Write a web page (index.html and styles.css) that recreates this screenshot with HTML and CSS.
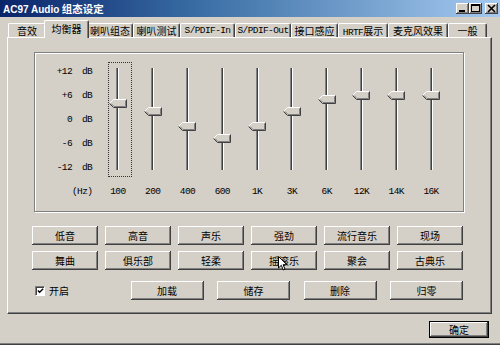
FILE: index.html
```html
<!DOCTYPE html>
<html>
<head>
<meta charset="utf-8">
<title>AC97 Audio 组态设定</title>
<link rel="stylesheet" href="styles.css">
</head>
<body>
<div class="window">
  <div class="titlebar">
    <span class="title"><span class="title-lat">AC97 Audio</span> 组态设定</span>
    <div class="caps">
      <span class="cap"><svg width="13" height="11" viewBox="0 0 13 11"><rect x="3" y="7" width="6" height="2" fill="#000"/></svg></span>
      <span class="cap"><svg width="13" height="11" viewBox="0 0 13 11"><rect x="2.5" y="1.5" width="8" height="7" fill="none" stroke="#000"/><rect x="2" y="1" width="9" height="2" fill="#000"/></svg></span>
      <span class="cap close"><svg width="13" height="11" viewBox="0 0 13 11"><path d="M3 2 L10 9 M10 2 L3 9" stroke="#000" stroke-width="1.6"/></svg></span>
    </div>
  </div>

  <div class="tabs">
    <div class="tab">音效</div>
    <div class="tab active">均衡器</div>
    <div class="tab">喇叭组态</div>
    <div class="tab">喇叭测试</div>
    <div class="tab lat">S/PDIF-In</div>
    <div class="tab lat">S/PDIF-Out</div>
    <div class="tab">接口感应</div>
    <div class="tab"><span class="lat">HRTF</span>展示</div>
    <div class="tab">麦克风效果</div>
    <div class="tab">一般</div>
  </div>

  <div class="panel">
    <div class="eqbox">
      <div class="scale lat">
        <div class="srow"><span class="num">+12</span><span>dB</span></div>
        <div class="srow"><span class="num">+6</span><span>dB</span></div>
        <div class="srow"><span class="num">0</span><span>dB</span></div>
        <div class="srow"><span class="num">-6</span><span>dB</span></div>
        <div class="srow"><span class="num">-12</span><span>dB</span></div>
        <div class="srow hz">(Hz)</div>
      </div>

      <div class="band">
        <span class="focusrect"></span>
        <div class="slider"><div class="track"></div>
          <svg class="thumb" style="top:31px" width="18" height="9" viewBox="0 0 18 9"><polygon points="0.5,4.5 4.5,0.5 17.5,0.5 17.5,8.5 4.5,8.5" fill="#D4D0C8"/><polyline points="0.5,4.5 4.5,0.5 17.5,0.5" fill="none" stroke="#fff"/><polyline points="0.5,4.5 4.5,8.5 17.5,8.5 17.5,0.5" fill="none" stroke="#404040"/><polyline points="2,4.5 5,7.5 16.5,7.5 16.5,1.5" fill="none" stroke="#808080"/></svg>
        </div>
        <div class="freq lat">100</div>
      </div>
      <div class="band">
        <div class="slider"><div class="track"></div>
          <svg class="thumb" style="top:39px" width="18" height="9" viewBox="0 0 18 9"><polygon points="0.5,4.5 4.5,0.5 17.5,0.5 17.5,8.5 4.5,8.5" fill="#D4D0C8"/><polyline points="0.5,4.5 4.5,0.5 17.5,0.5" fill="none" stroke="#fff"/><polyline points="0.5,4.5 4.5,8.5 17.5,8.5 17.5,0.5" fill="none" stroke="#404040"/><polyline points="2,4.5 5,7.5 16.5,7.5 16.5,1.5" fill="none" stroke="#808080"/></svg>
        </div>
        <div class="freq lat">200</div>
      </div>
      <div class="band">
        <div class="slider"><div class="track"></div>
          <svg class="thumb" style="top:54px" width="18" height="9" viewBox="0 0 18 9"><polygon points="0.5,4.5 4.5,0.5 17.5,0.5 17.5,8.5 4.5,8.5" fill="#D4D0C8"/><polyline points="0.5,4.5 4.5,0.5 17.5,0.5" fill="none" stroke="#fff"/><polyline points="0.5,4.5 4.5,8.5 17.5,8.5 17.5,0.5" fill="none" stroke="#404040"/><polyline points="2,4.5 5,7.5 16.5,7.5 16.5,1.5" fill="none" stroke="#808080"/></svg>
        </div>
        <div class="freq lat">400</div>
      </div>
      <div class="band">
        <div class="slider"><div class="track"></div>
          <svg class="thumb" style="top:66px" width="18" height="9" viewBox="0 0 18 9"><polygon points="0.5,4.5 4.5,0.5 17.5,0.5 17.5,8.5 4.5,8.5" fill="#D4D0C8"/><polyline points="0.5,4.5 4.5,0.5 17.5,0.5" fill="none" stroke="#fff"/><polyline points="0.5,4.5 4.5,8.5 17.5,8.5 17.5,0.5" fill="none" stroke="#404040"/><polyline points="2,4.5 5,7.5 16.5,7.5 16.5,1.5" fill="none" stroke="#808080"/></svg>
        </div>
        <div class="freq lat">600</div>
      </div>
      <div class="band">
        <div class="slider"><div class="track"></div>
          <svg class="thumb" style="top:54px" width="18" height="9" viewBox="0 0 18 9"><polygon points="0.5,4.5 4.5,0.5 17.5,0.5 17.5,8.5 4.5,8.5" fill="#D4D0C8"/><polyline points="0.5,4.5 4.5,0.5 17.5,0.5" fill="none" stroke="#fff"/><polyline points="0.5,4.5 4.5,8.5 17.5,8.5 17.5,0.5" fill="none" stroke="#404040"/><polyline points="2,4.5 5,7.5 16.5,7.5 16.5,1.5" fill="none" stroke="#808080"/></svg>
        </div>
        <div class="freq lat">1K</div>
      </div>
      <div class="band">
        <div class="slider"><div class="track"></div>
          <svg class="thumb" style="top:39px" width="18" height="9" viewBox="0 0 18 9"><polygon points="0.5,4.5 4.5,0.5 17.5,0.5 17.5,8.5 4.5,8.5" fill="#D4D0C8"/><polyline points="0.5,4.5 4.5,0.5 17.5,0.5" fill="none" stroke="#fff"/><polyline points="0.5,4.5 4.5,8.5 17.5,8.5 17.5,0.5" fill="none" stroke="#404040"/><polyline points="2,4.5 5,7.5 16.5,7.5 16.5,1.5" fill="none" stroke="#808080"/></svg>
        </div>
        <div class="freq lat">3K</div>
      </div>
      <div class="band">
        <div class="slider"><div class="track"></div>
          <svg class="thumb" style="top:27px" width="18" height="9" viewBox="0 0 18 9"><polygon points="0.5,4.5 4.5,0.5 17.5,0.5 17.5,8.5 4.5,8.5" fill="#D4D0C8"/><polyline points="0.5,4.5 4.5,0.5 17.5,0.5" fill="none" stroke="#fff"/><polyline points="0.5,4.5 4.5,8.5 17.5,8.5 17.5,0.5" fill="none" stroke="#404040"/><polyline points="2,4.5 5,7.5 16.5,7.5 16.5,1.5" fill="none" stroke="#808080"/></svg>
        </div>
        <div class="freq lat">6K</div>
      </div>
      <div class="band">
        <div class="slider"><div class="track"></div>
          <svg class="thumb" style="top:23px" width="18" height="9" viewBox="0 0 18 9"><polygon points="0.5,4.5 4.5,0.5 17.5,0.5 17.5,8.5 4.5,8.5" fill="#D4D0C8"/><polyline points="0.5,4.5 4.5,0.5 17.5,0.5" fill="none" stroke="#fff"/><polyline points="0.5,4.5 4.5,8.5 17.5,8.5 17.5,0.5" fill="none" stroke="#404040"/><polyline points="2,4.5 5,7.5 16.5,7.5 16.5,1.5" fill="none" stroke="#808080"/></svg>
        </div>
        <div class="freq lat">12K</div>
      </div>
      <div class="band">
        <div class="slider"><div class="track"></div>
          <svg class="thumb" style="top:23px" width="18" height="9" viewBox="0 0 18 9"><polygon points="0.5,4.5 4.5,0.5 17.5,0.5 17.5,8.5 4.5,8.5" fill="#D4D0C8"/><polyline points="0.5,4.5 4.5,0.5 17.5,0.5" fill="none" stroke="#fff"/><polyline points="0.5,4.5 4.5,8.5 17.5,8.5 17.5,0.5" fill="none" stroke="#404040"/><polyline points="2,4.5 5,7.5 16.5,7.5 16.5,1.5" fill="none" stroke="#808080"/></svg>
        </div>
        <div class="freq lat">14K</div>
      </div>
      <div class="band">
        <div class="slider"><div class="track"></div>
          <svg class="thumb" style="top:23px" width="18" height="9" viewBox="0 0 18 9"><polygon points="0.5,4.5 4.5,0.5 17.5,0.5 17.5,8.5 4.5,8.5" fill="#D4D0C8"/><polyline points="0.5,4.5 4.5,0.5 17.5,0.5" fill="none" stroke="#fff"/><polyline points="0.5,4.5 4.5,8.5 17.5,8.5 17.5,0.5" fill="none" stroke="#404040"/><polyline points="2,4.5 5,7.5 16.5,7.5 16.5,1.5" fill="none" stroke="#808080"/></svg>
        </div>
        <div class="freq lat">16K</div>
      </div>
    </div>

    <div class="presets">
      <button class="btn">低音</button>
      <button class="btn">高音</button>
      <button class="btn">声乐</button>
      <button class="btn">强劲</button>
      <button class="btn">流行音乐</button>
      <button class="btn">现场</button>
      <button class="btn">舞曲</button>
      <button class="btn">俱乐部</button>
      <button class="btn">轻柔</button>
      <button class="btn">摇滚乐</button>
      <button class="btn">聚会</button>
      <button class="btn">古典乐</button>
    </div>

    <div class="actions">
      <label class="check"><span class="box"><svg width="8" height="8" viewBox="0 0 8 8"><path d="M1 3.5 L3 5.5 L7 1.5" fill="none" stroke="#000" stroke-width="1.6"/></svg></span>开启</label>
      <button class="btn">加载</button>
      <button class="btn">储存</button>
      <button class="btn">删除</button>
      <button class="btn">归零</button>
    </div>
  </div>

  <div class="footer">
    <button class="btn default">确定</button>
  </div>
</div>
<svg class="cursor" width="10" height="16" viewBox="0 0 10 16"><path d="M0.5 0.5 L0.5 12 L3.3 9.3 L5.3 14 L7 13.2 L5.1 8.7 L8.8 8.7 Z" fill="#fff" stroke="#000" stroke-width="1"/></svg>
</body>
</html>
```

FILE: styles.css
```css
* { box-sizing: border-box; margin: 0; padding: 0; }
html, body { width: 500px; height: 345px; overflow: hidden; }
body {
  background: #D4D0C8;
  font-family: "Noto Sans CJK SC", "Noto Sans", sans-serif;
  font-size: 10px;
  color: #000;
  position: relative;
}
.lat {
  font-family: "Liberation Mono", "Noto Sans CJK SC", monospace;
  font-size: 9.5px;
  letter-spacing: -0.6px;
}
.window {
  height: 345px;
  display: flex;
  flex-direction: column;
  box-shadow: inset 0 -1px #404040, inset 0 -2px #808080;
}

/* title bar */
.titlebar {
  height: 17px;
  flex: none;
  display: flex;
  align-items: center;
  padding: 0 2px 0 3px;
  background: linear-gradient(to right, #0A246A, #3A6EA5 40%, #A6CAF0);
}
.title {
  color: #fff;
  font-weight: bold;
  font-size: 10.5px;
  line-height: 17px;
  white-space: nowrap;
}
.title-lat { font-family: "Liberation Sans", sans-serif; font-size: 10px; }
.caps { margin-left: auto; display: flex; align-items: center; }
.cap {
  width: 13px;
  height: 11px;
  background: #D4D0C8;
  box-shadow: inset -1px -1px #404040, inset 1px 1px #fff, inset -2px -2px #808080;
  display: flex;
}
.cap.close { margin-left: 3px; }

/* tabs */
.tabs {
  margin-top: 3px;
  height: 17px;
  flex: none;
  display: flex;
  align-items: flex-end;
  padding-left: 8px;
}
.tab {
  flex: none;
  height: 14px;
  line-height: 14px;
  text-align: center;
  white-space: nowrap;
  border-top: 1px solid #fff;
  border-left: 1px solid #fff;
  border-right: 1px solid #404040;
  border-radius: 2px 2px 0 0;
  box-shadow: inset -1px 0 #808080;
  background: #D4D0C8;
}
.tab:nth-child(1) { width: 38px; }
.tab:nth-child(2) { width: 41px; }
.tab:nth-child(3) { width: 46px; }
.tab:nth-child(4) { width: 47px; }
.tab:nth-child(5) { width: 55px; }
.tab:nth-child(6) { width: 56px; }
.tab:nth-child(7) { width: 47px; }
.tab:nth-child(8) { width: 50px; }
.tab:nth-child(9) { width: 60px; }
.tab:nth-child(10) { width: 39px; }
.tab.active {
  width: 45px;
  height: 18px;
  line-height: 15px;
  margin: 0 -2px -1px;
  position: relative;
  z-index: 1;
}

/* page */
.panel {
  margin-left: 7px;
  width: 485px;
  height: 277px;
  flex: none;
  border-top: 1px solid #fff;
  border-left: 1px solid #fff;
  border-right: 1px solid #404040;
  border-bottom: 1px solid #404040;
  box-shadow: inset -1px -1px #808080;
  padding-top: 14px;
  display: flex;
  flex-direction: column;
}

.eqbox {
  margin-left: 26px;
  width: 430px;
  height: 160px;
  flex: none;
  border: 1px solid #808080;
  box-shadow: inset 1px 1px #fff, 1px 1px #fff;
  display: flex;
}
.scale {
  width: 65.5px;
  flex: none;
  padding-top: 7px;
}
.srow {
  height: 24px;
  line-height: 24px;
  display: grid;
  grid-template-columns: 37px auto;
  column-gap: 10px;
  white-space: nowrap;
}
.srow .num { text-align: right; }
.srow.hz { display: block; padding-left: 37px; }

.band {
  width: 34.8px;
  flex: none;
  position: relative;
  padding-top: 15px;
  display: flex;
  flex-direction: column;
  align-items: center;
}
.slider {
  position: relative;
  width: 100%;
  height: 102px;
}
.track {
  width: 3px;
  height: 102px;
  margin: 0 auto;
  background: #404040;
  border-left: 1px solid #808080;
  border-right: 1px solid #fff;
}
.thumb {
  position: absolute;
  left: calc(50% - 9px);
  display: block;
}
.freq {
  margin-top: 16px;
  line-height: 12px;
  white-space: nowrap;
}
.focusrect {
  position: absolute;
  left: 7.5px;
  top: 9px;
  width: 24px;
  height: 115px;
  border: 1px dotted #333;
}

/* buttons */
.btn {
  font: inherit;
  color: #000;
  background: #D4D0C8;
  border: none;
  box-shadow: inset -1px -1px #404040, inset 1px 1px #fff, inset -2px -2px #808080;
  display: flex;
  align-items: center;
  justify-content: center;
  line-height: 1;
}
.presets {
  margin: 14px 0 0 24px;
  width: 431px;
  display: grid;
  grid-template-columns: repeat(6, 66px);
  grid-auto-rows: 19px;
  column-gap: 7px;
  row-gap: 6px;
}
.actions {
  margin: 11px 0 0 24px;
  width: 431px;
  height: 19px;
  display: grid;
  grid-template-columns: 1fr repeat(4, 73px);
  column-gap: 13.5px;
}
.check {
  display: flex;
  align-items: center;
  gap: 4px;
  padding-left: 3px;
}
.box {
  width: 10px;
  height: 10px;
  background: #fff;
  border-top: 1px solid #808080;
  border-left: 1px solid #808080;
  border-right: 1px solid #fff;
  border-bottom: 1px solid #fff;
  box-shadow: inset 1px 1px #404040;
  display: flex;
  align-items: center;
  justify-content: center;
  padding: 1px 0 0 1px;
}

.footer {
  display: flex;
  justify-content: flex-end;
  padding: 7px 11px 0 0;
}
.btn.default {
  width: 60px;
  height: 17px;
  border: 1px solid #000;
}

.cursor {
  position: absolute;
  left: 278px;
  top: 256px;
}
```
